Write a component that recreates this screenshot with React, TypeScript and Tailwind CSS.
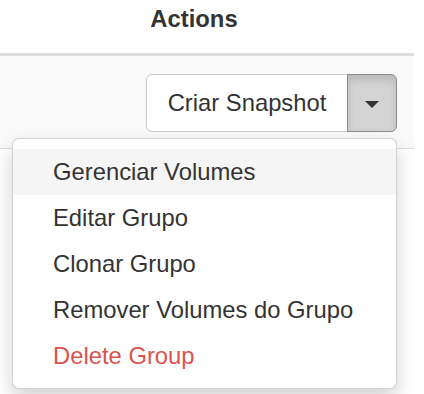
import React from "react";

const menuItems = [
  { label: "Gerenciar Volumes", active: true },
  { label: "Editar Grupo" },
  { label: "Clonar Grupo" },
  { label: "Remover Volumes do Grupo" },
  { label: "Delete Group", danger: true },
];

export default function App() {
  return (
    <div className="relative h-[394px] w-[424px] bg-white font-['Liberation_Sans',Arial,sans-serif] text-[23.8px] text-[#333]">
      <div className="w-[414px]">
        <div className="h-[56px] border-b-[3px] border-[#ddd] pr-[26px] pt-[2px] text-center font-bold leading-[34px]">
          Actions
        </div>
        <div className="flex h-[93px] justify-end border-b border-[#ddd] bg-[#f9f9f9] pr-[17px] pt-[18px]">
          <div className="flex h-[58px]">
            <button
              type="button"
              className="h-[58px] w-[202px] rounded-l-[6px] border border-[#ccc] bg-white leading-[34px] text-[#333]"
            >
              Criar Snapshot
            </button>
            <button
              type="button"
              className="-ml-px flex h-[58px] w-[50px] items-center justify-center rounded-r-[6px] border border-[#8c8c8c] bg-[#d4d4d4] shadow-[inset_0_5px_8px_rgba(0,0,0,0.125)]"
            >
              <span className="mt-[3px] block h-0 w-0 border-x-[7px] border-t-[7px] border-x-transparent border-t-[#333]" />
            </button>
          </div>
        </div>
      </div>

      <ul className="absolute left-[12px] top-[138px] w-[385px] rounded-[7px] border border-[rgba(0,0,0,0.18)] bg-white pb-[9px] pt-[10px] shadow-[0_10px_20px_rgba(0,0,0,0.175)]">
        {menuItems.map((item) => (
          <li
            key={item.label}
            className={`h-[46px] px-[40px] leading-[46px] ${
              item.active ? "bg-[#f5f5f5]" : ""
            } ${item.danger ? "text-[#d9534f]" : "text-[#333]"}`}
          >
            {item.label}
          </li>
        ))}
      </ul>
    </div>
  );
}
